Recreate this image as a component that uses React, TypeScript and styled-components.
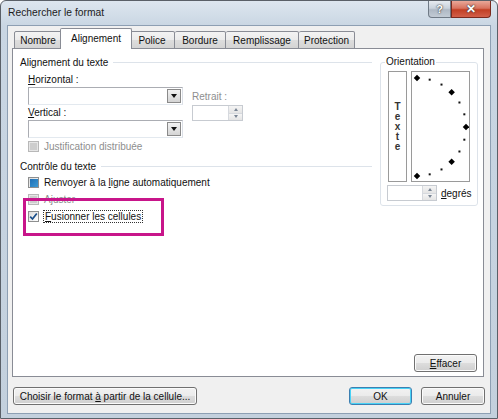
import React from 'react';
import styled, { createGlobalStyle } from 'styled-components';

const GlobalStyle = createGlobalStyle`
  html, body { margin: 0; padding: 0; background: #ffffff; }
  body { font-family: "Liberation Sans", Arial, sans-serif; font-size: 10px; color: #111111; }
  u { text-underline-offset: 1px; }
`;

const Window = styled.div`
  position: relative;
  width: 498px;
  height: 419px;
  box-sizing: border-box;
  border: 1px solid #5a6068;
  border-radius: 6px 6px 0 0;
  background: linear-gradient(180deg, #dde6ef 0px, #c9d6e3 25px, #c3d0dd 100%);
  display: flex;
  flex-direction: column;
  overflow: hidden;
`;

const TitleBar = styled.div`
  height: 24px;
  display: flex;
  align-items: flex-start;
  padding-left: 7px;
`;

const Title = styled.span`
  margin-top: 6px;
  font-size: 10.3px;
  color: #1c1c1c;
  flex: 1;
`;

const CaptionButton = styled.div<{ $close?: boolean }>`
  width: ${p => (p.$close ? 40 : 23)}px;
  height: 17px;
  box-sizing: border-box;
  border: 1px solid ${p => (p.$close ? '#7a2a1e' : '#6f7a86')};
  border-top: none;
  border-radius: ${p => (p.$close ? '0 0 4px 0' : '0 0 0 4px')};
  background: ${p =>
    p.$close
      ? 'linear-gradient(180deg, #e9a899 0%, #d8735f 45%, #c23f24 55%, #d2604a 100%)'
      : 'linear-gradient(180deg, #e6ebf0 0%, #c9d2dc 45%, #aeb8c4 55%, #c2cbd5 100%)'};
  display: flex;
  align-items: center;
  justify-content: center;
  color: #ffffff;
  font-weight: bold;
  font-size: ${p => (p.$close ? 12 : 11)}px;
  text-shadow: 0 0 2px #3a3a3a, 0 0 1px #3a3a3a;
`;

const Caption = styled.div`
  display: flex;
  margin-right: 6px;
`;

const Client = styled.div`
  flex: 1;
  margin: 0 6px 4px 6px;
  border: 1px solid #8d9fb3;
  background: #f0f0f0;
  display: flex;
  flex-direction: column;
  padding: 3px 6px 0 4px;
`;

const TabStrip = styled.div`
  display: flex;
  align-items: flex-end;
  height: 20px;
  padding-left: 2px;
  position: relative;
  z-index: 1;
  margin-bottom: -1px;
`;

const Tab = styled.div<{ $w: number; $active?: boolean }>`
  width: ${p => p.$w}px;
  box-sizing: border-box;
  height: ${p => (p.$active ? 21 : 18)}px;
  margin: ${p => (p.$active ? '0 -2px' : '0')};
  border: 1px solid #898c95;
  border-bottom: ${p => (p.$active ? 'none' : '1px solid #898c95')};
  border-left: ${p => (p.$active ? '1px solid #898c95' : 'none')};
  border-radius: 2px 2px 0 0;
  background: ${p => (p.$active ? '#ffffff' : 'linear-gradient(180deg, #f3f3f3 0%, #ebebeb 50%, #dddddd 51%, #d4d4d4 100%)')};
  display: flex;
  align-items: center;
  justify-content: center;
  padding-bottom: ${p => (p.$active ? 2 : 0)}px;
  position: relative;
  z-index: ${p => (p.$active ? 2 : 1)};
  white-space: nowrap;
  &:first-child { border-left: 1px solid #898c95; }
`;

const Panel = styled.div`
  height: 329px;
  box-sizing: border-box;
  background: #ffffff;
  border: 1px solid #898c95;
  padding: 6px 5px 4px 7px;
  display: flex;
  flex-direction: column;
`;

const TopArea = styled.div`
  display: flex;
  gap: 8px;
`;

const LeftCol = styled.div`
  width: 352px;
  display: flex;
  flex-direction: column;
`;

const GroupHeader = styled.div<{ $gap?: number }>`
  display: flex;
  align-items: center;
  height: 14px;
  margin-top: ${p => p.$gap ?? 0}px;
  &::after {
    content: '';
    flex: 1;
    height: 1px;
    margin-left: 5px;
    background: #dde3ea;
  }
`;

const FieldGrid = styled.div`
  display: grid;
  grid-template-columns: 155px 52px;
  grid-template-rows: 16px 18px 15px 18px;
  column-gap: 9px;
  padding-left: 8px;
  margin-top: 2px;
`;

const Label = styled.div<{ $disabled?: boolean }>`
  display: flex;
  align-items: center;
  white-space: nowrap;
  color: ${p => (p.$disabled ? '#8e8e8e' : '#111111')};
`;

const Combo = styled.div`
  box-sizing: border-box;
  height: 18px;
  border: 1px solid #abadb3;
  border-right-color: #dbdfe6;
  border-bottom-color: #e3e9ef;
  background: #ffffff;
  display: flex;
  justify-content: flex-end;
  padding: 1px;
`;

const DropButton = styled.div`
  width: 14px;
  box-sizing: border-box;
  border: 1px solid #8a8a8a;
  background: linear-gradient(180deg, #f2f2f2 0%, #e3e3e3 50%, #d4d4d4 100%);
  display: flex;
  align-items: center;
  justify-content: center;
  &::after {
    content: '';
    border-left: 3.5px solid transparent;
    border-right: 3.5px solid transparent;
    border-top: 4px solid #111;
  }
`;

const Spin = styled.div<{ $w: number }>`
  box-sizing: border-box;
  width: ${p => p.$w}px;
  height: 16px;
  border: 1px solid #c7cbd1;
  background: #ffffff;
  display: flex;
  justify-content: flex-end;
`;

const SpinArrows = styled.div`
  width: 13px;
  display: flex;
  flex-direction: column;
  border-left: 1px solid #d6d9de;
`;

const SpinArrow = styled.div<{ $up?: boolean }>`
  flex: 1;
  background: linear-gradient(180deg, #f5f5f5, #e4e4e4);
  display: flex;
  align-items: center;
  justify-content: center;
  border-bottom: ${p => (p.$up ? '1px solid #d6d9de' : 'none')};
  &::after {
    content: '';
    border-left: 2.5px solid transparent;
    border-right: 2.5px solid transparent;
    ${p => (p.$up ? 'border-bottom: 3px solid #7a8695;' : 'border-top: 3px solid #7a8695;')}
  }
`;

const CheckRow = styled.div<{ $h?: number; $gap?: number }>`
  display: flex;
  align-items: center;
  gap: 5px;
  height: ${p => p.$h ?? 17}px;
  margin-top: ${p => p.$gap ?? 0}px;
  padding-left: 8px;
`;

const Box = styled.div<{ $state: 'none' | 'mixed' | 'checked' | 'disabled' }>`
  width: 11px;
  height: 11px;
  box-sizing: border-box;
  border: 1px solid ${p => (p.$state === 'disabled' ? '#b8b8b8' : '#8e8f8f')};
  background: ${p => (p.$state === 'disabled' ? '#e6e6e6' : 'linear-gradient(135deg, #dcdcdc, #ffffff)')};
  display: flex;
  align-items: center;
  justify-content: center;
  flex-shrink: 0;
  &::after {
    content: '';
    ${p =>
      p.$state === 'mixed'
        ? 'width: 8px; height: 8px; background: linear-gradient(135deg, #1f6fb5, #3e9ad4);'
        : p.$state === 'disabled'
        ? 'width: 7px; height: 7px; background: #cdcdcd;'
        : ''}
  }
`;

const CheckMark = styled.svg`
  width: 9px;
  height: 9px;
`;

const FocusText = styled.span`
  outline: 1px dotted #333;
  outline-offset: 0px;
  padding: 0 1px;
`;

const OrientationGroup = styled.fieldset`
  width: 98px;
  height: 151px;
  box-sizing: border-box;
  margin: 0;
  padding: 2px 0 0 7px;
  border: 1px solid #dde3ea;
  border-radius: 3px;
  min-width: 0;
  legend {
    padding: 0 1px;
    margin-left: -3px;
    line-height: 14px;
  }
`;

const Dials = styled.div`
  display: flex;
  gap: 4px;
  height: 111px;
`;

const TextStrip = styled.div`
  width: 19px;
  box-sizing: border-box;
  border: 1px solid #9a9a9a;
  display: flex;
  flex-direction: column;
  align-items: center;
  justify-content: center;
  font-size: 10px;
  line-height: 10px;
  font-weight: bold;
  color: #333;
`;

const DialBox = styled.div`
  width: 59px;
  box-sizing: border-box;
  border: 1px solid #9a9a9a;
`;

const DegreeRow = styled.div`
  display: flex;
  align-items: center;
  gap: 4px;
  margin-top: 3px;
  margin-left: -1px;
`;

const Button = styled.div<{ $w: number; $focus?: boolean }>`
  width: ${p => p.$w}px;
  height: 18px;
  box-sizing: border-box;
  border: 1px solid ${p => (p.$focus ? '#3c7fb1' : '#707070')};
  border-radius: 3px;
  box-shadow: inset 0 0 0 1px ${p => (p.$focus ? '#48d2f6' : '#fbfbfb')};
  background: linear-gradient(180deg, #f2f2f2 0%, #ebebeb 49%, #dddddd 50%, #cfcfcf 100%);
  display: flex;
  align-items: center;
  justify-content: center;
  white-space: nowrap;
  color: #111111;
`;

const PanelFooter = styled.div`
  margin-top: auto;
  display: flex;
  justify-content: flex-end;
  padding-right: 1px;
`;

const BottomBar = styled.div`
  display: flex;
  align-items: center;
  gap: 9px;
  margin-top: 10px;
  margin-left: 1px;
  margin-right: -1px;
`;

const Spacer = styled.div`
  flex: 1;
`;

const Highlight = styled.div`
  position: absolute;
  left: 22px;
  top: 197px;
  width: 141px;
  height: 38px;
  box-sizing: border-box;
  border: 3px solid #c8158a;
  pointer-events: none;
`;

const tabs = [
  { label: 'Nombre', w: 48 },
  { label: 'Alignement', w: 72, active: true },
  { label: 'Police', w: 45 },
  { label: 'Bordure', w: 51 },
  { label: 'Remplissage', w: 73 },
  { label: 'Protection', w: 56 },
];

function Dial() {
  const cx = 5;
  const cy = 55;
  const r = 49;
  const dots = [];
  for (let a = 90; a >= -90; a -= 15) {
    const rad = (a * Math.PI) / 180;
    const x = cx + r * Math.cos(rad);
    const y = cy - r * Math.sin(rad);
    const big = a % 45 === 0;
    dots.push(
      big ? (
        <rect key={a} x={x - 2.3} y={y - 2.3} width={4.6} height={4.6} transform={`rotate(45 ${x} ${y})`} fill="#000" />
      ) : (
        <rect key={a} x={x - 1} y={y - 1} width={2} height={2} fill="#111" />
      )
    );
  }
  return (
    <svg width="57" height="109" viewBox="0 0 57 109">
      {dots}
    </svg>
  );
}

function Checkbox({ state }: { state: 'none' | 'mixed' | 'checked' | 'disabled' }) {
  return (
    <Box $state={state}>
      {state === 'checked' && (
        <CheckMark viewBox="0 0 9 9">
          <path d="M1.2 4.6 L3.5 7 L7.8 1.4" stroke="#1b4f8a" strokeWidth="1.7" fill="none" />
        </CheckMark>
      )}
    </Box>
  );
}

export default function App() {
  return (
    <>
      <GlobalStyle />
      <Window>
        <TitleBar>
          <Title>Rechercher le format</Title>
          <Caption>
            <CaptionButton>?</CaptionButton>
            <CaptionButton $close>✕</CaptionButton>
          </Caption>
        </TitleBar>
        <Client>
          <TabStrip>
            {tabs.map(t => (
              <Tab key={t.label} $w={t.w} $active={t.active}>
                {t.label}
              </Tab>
            ))}
          </TabStrip>
          <Panel>
            <TopArea>
              <LeftCol>
                <GroupHeader>Alignement du texte</GroupHeader>
                <FieldGrid>
                  <Label>
                    <span><u>H</u>orizontal :</span>
                  </Label>
                  <div />
                  <Combo>
                    <DropButton />
                  </Combo>
                  <Label $disabled>Retrait :</Label>
                  <Label>
                    <span><u>V</u>ertical :</span>
                  </Label>
                  <Spin $w={51}>
                    <SpinArrows>
                      <SpinArrow $up />
                      <SpinArrow />
                    </SpinArrows>
                  </Spin>
                  <Combo>
                    <DropButton />
                  </Combo>
                  <div />
                </FieldGrid>
                <CheckRow $h={16}>
                  <Checkbox state="disabled" />
                  <Label $disabled>Justification distribuée</Label>
                </CheckRow>
                <GroupHeader $gap={5}>Contrôle du texte</GroupHeader>
                <CheckRow $gap={1}>
                  <Checkbox state="mixed" />
                  <Label>
                    <span>Renvoyer à la <u>l</u>igne automatiquement</span>
                  </Label>
                </CheckRow>
                <CheckRow>
                  <Checkbox state="disabled" />
                  <Label $disabled>Ajuster</Label>
                </CheckRow>
                <CheckRow>
                  <Checkbox state="checked" />
                  <Label>
                    <FocusText><u>F</u>usionner les cellules</FocusText>
                  </Label>
                </CheckRow>
              </LeftCol>
              <OrientationGroup>
                <legend>Orientation</legend>
                <Dials>
                  <TextStrip>
                    <span>T</span>
                    <span>e</span>
                    <span>x</span>
                    <span>t</span>
                    <span>e</span>
                  </TextStrip>
                  <DialBox>
                    <Dial />
                  </DialBox>
                </Dials>
                <DegreeRow>
                  <Spin $w={50}>
                    <SpinArrows>
                      <SpinArrow $up />
                      <SpinArrow />
                    </SpinArrows>
                  </Spin>
                  <Label>
                    <span><u>d</u>egrés</span>
                  </Label>
                </DegreeRow>
              </OrientationGroup>
            </TopArea>
            <PanelFooter>
              <Button $w={63}>
                <span><u>E</u>ffacer</span>
              </Button>
            </PanelFooter>
          </Panel>
          <BottomBar>
            <Button $w={184}>
              <span>Choisir le format <u>à</u> partir de la cellule...</span>
            </Button>
            <Spacer />
            <Button $w={63} $focus>OK</Button>
            <Button $w={64}>Annuler</Button>
          </BottomBar>
        </Client>
        <Highlight />
      </Window>
    </>
  );
}
